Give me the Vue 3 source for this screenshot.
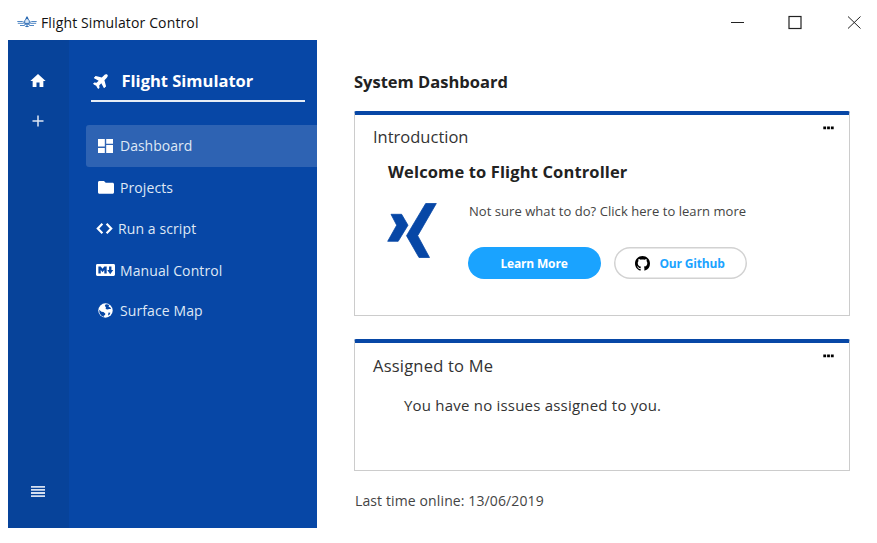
<script setup>
const menu = [
  { id: 'dashboard', label: 'Dashboard', active: true },
  { id: 'projects', label: 'Projects' },
  { id: 'script', label: 'Run a script' },
  { id: 'manual', label: 'Manual Control' },
  { id: 'map', label: 'Surface Map' },
]
</script>

<template>
  <div class="window">
    <header class="titlebar">
      <svg class="app-icon" viewBox="0 0 20 12">
        <g fill="none" stroke="#4f86c4" stroke-width="1">
          <path d="M.3 5.500h5.200l1.800 1M19.700 5.500h-5.200l-1.800 1M.8 7.300h5.700l1.200 1.100h4.600l1.200-1.100h5.700M3 9.500h4.500l1 1h3l1-1H17" />
          <path d="M10 1.800L7.700 4.800v2.600h4.600V4.800z" fill="#dbe8f6" stroke="#2f6db5" />
        </g>
        <path d="M10 0l1.700 2.800H8.300zM8.800 9.500h2.400L10 11.500z" fill="#2466b0" />
      </svg>
      <span class="app-title">Flight Simulator Control</span>
      <svg class="win-controls" viewBox="0 0 131 16" fill="none" stroke="#222" stroke-width="1">
        <path d="M0 7.500h13" />
        <rect x="58" y="1.500" width="12" height="12" stroke-width="1.200" />
        <path d="M117 1.500l12.500 12M129.500 1.500l-12.500 12" />
      </svg>
    </header>

    <div class="body">
      <nav class="rail">
        <svg class="home" viewBox="2 3 20 17" fill="#fff"><path d="M10 20v-6h4v6h5v-8h3L12 3 2 12h3v8z" /></svg>
        <svg class="plus" viewBox="0 0 12 12" fill="none" stroke="#dfe8f5" stroke-width="1.500"><path d="M6 .5v11M.5 6h11" /></svg>
        <svg class="lines" viewBox="0 0 14 11" fill="#d5e0f1"><path d="M0 0h14v1.800H0zM0 3.050h14v1.800H0zM0 6.100h14v1.800H0zM0 9.200h14V11H0z" /></svg>
      </nav>

      <aside class="side">
        <div class="brand">
          <svg class="plane" viewBox="0 0 576 512" fill="#fff">
            <path d="M480 192H365.710L260.610 8.060A16 16 0 0 0 246.710 0h-65.500c-10.630 0-18.300 10.170-15.380 20.390L214.860 192H112l-43.200-57.600c-3-4-7.800-6.400-12.800-6.400H16C5.600 128-2 137.800.5 147.900L32 256 .5 364.100C-2 374.200 5.600 384 16 384h40c5 0 9.800-2.400 12.800-6.400L112 320h102.860l-49 171.600c-2.900 10.200 4.700 20.400 15.400 20.400h65.500c5.700 0 11-3 13.900-8L365.710 320H480c35.300 0 96-28.700 96-64s-60.700-64-96-64z" />
          </svg>
          <span>Flight Simulator</span>
        </div>
        <ul class="menu">
          <li v-for="m in menu" :key="m.id" :class="[m.id, { active: m.active }]">
            <span class="mi">
              <svg v-if="m.id === 'dashboard'" width="15" height="14" viewBox="0 0 15 14" fill="#fff">
                <path d="M0 0h6.800v7.600H0zM0 8.900h6.800V14H0zM8.200 0H15v4.700H8.200zM8.200 6H15v8H8.200z" />
              </svg>
              <svg v-else-if="m.id === 'projects'" width="16" height="13" viewBox="0 0 16 13" fill="#fff">
                <path d="M1.500 0H6l1.700 1.700h6.800c.9 0 1.500.6 1.500 1.500v8c0 .9-.6 1.500-1.500 1.500h-13C.6 12.700 0 12.100 0 11.200V1.500C0 .6.600 0 1.500 0z" />
              </svg>
              <svg v-else-if="m.id === 'script'" width="17" height="11" viewBox="0 0 17 11" fill="none" stroke="#fff" stroke-width="2.200">
                <path d="M6.400.8L1.800 5.500l4.600 4.700M10.600.8l4.600 4.700-4.600 4.700" />
              </svg>
              <svg v-else-if="m.id === 'manual'" width="19" height="12" viewBox="0 3 16 10" fill="#fff">
                <path d="M14.850 3H1.150C.52 3 0 3.520 0 4.150v7.690C0 12.480.52 13 1.150 13h13.690c.64 0 1.150-.52 1.150-1.150v-7.700C16 3.520 15.480 3 14.850 3zM9 11H7V8L5.500 9.920 4 8v3H2V5h2l1.500 2L7 5h2v6zm2.990.5L9.500 8H11V5h2v3h1.500l-2.510 3.500z" />
              </svg>
              <svg v-else width="15" height="15" viewBox="0 0 15 15">
                <circle cx="7.500" cy="7.500" r="7.200" fill="#fff" />
                <path d="M7.800 1.200l2.400.3 1.100 1.200-.9 1.200 1.700.3 1 1.900-2-.2-1.600.7-1.800-.7.200-1.700-1.100-1.400zM1.200 6.800l2.300 1.900 2 .3 1.900 1.700-.4 1.300-1.300.7.2 1.200-2.700-1.400-1.700-2.600zM10.500 9.500l1.900.3-.9 1.900-1.500.9z" fill="#0747a6" />
              </svg>
            </span>
            <span class="label">{{ m.label }}</span>
          </li>
        </ul>
      </aside>

      <main class="main">
        <h1>System Dashboard</h1>

        <section class="card intro">
          <div class="card-head">
            <h2 class="t-intro">Introduction</h2>
            <svg class="dots" viewBox="0 0 11 4"><path d="M.3.500h2.800v2.800H.3zM4.100.500h2.800v2.800H4.100zM7.900.500h2.800v2.800H7.900z" /></svg>
          </div>
          <h3>Welcome to Flight Controller</h3>
          <div class="intro-row">
            <svg class="logo" viewBox="0 0 50 55" fill="#0747a6" stroke="#0747a6" stroke-width=".8" stroke-linejoin="round">
              <path d="M4 11.300h10.600L21 22.200 11.200 38.300H.7L9.700 22.200zM38.700.5h10.600L30.700 32.700 42.500 54.500H32L19.500 32.700z" />
            </svg>
            <div class="intro-text">
              <p>Not sure what to do? Click here to learn more</p>
              <div class="buttons">
                <button class="btn primary">Learn More</button>
                <button class="btn outline">
                  <svg viewBox="0 0 16 16"><path d="M8 0C3.580 0 0 3.580 0 8c0 3.540 2.290 6.530 5.470 7.590.4.070.55-.17.55-.38 0-.19-.01-.82-.01-1.490-2.010.37-2.530-.49-2.690-.94-.09-.23-.48-.94-.82-1.130-.28-.15-.68-.52-.01-.53.63-.01 1.080.58 1.230.82.72 1.210 1.870.87 2.330.66.070-.52.28-.87.51-1.070-1.780-.2-3.640-.89-3.640-3.950 0-.87.31-1.590.82-2.150-.08-.2-.36-1.020.08-2.120 0 0 .67-.21 2.200.82.64-.18 1.320-.27 2-.27s1.360.09 2 .27c1.530-1.040 2.200-.82 2.200-.82.44 1.100.16 1.920.08 2.120.51.56.82 1.270.82 2.150 0 3.070-1.870 3.750-3.650 3.950.29.25.54.73.54 1.480 0 1.070-.01 1.930-.01 2.200 0 .21.15.46.55.38A8.010 8.010 0 0 0 16 8c0-4.420-3.580-8-8-8z" /></svg>
                  <span>Our Github</span>
                </button>
              </div>
            </div>
          </div>
        </section>

        <section class="card assigned">
          <div class="card-head">
            <h2 class="t-assigned">Assigned to Me</h2>
            <svg class="dots" viewBox="0 0 11 4"><path d="M.3.500h2.800v2.800H.3zM4.100.500h2.800v2.800H4.100zM7.900.500h2.800v2.800H7.900z" /></svg>
          </div>
          <p class="empty">You have no issues assigned to you.</p>
        </section>

        <footer>Last time online: 13/06/2019</footer>
      </main>
    </div>
  </div>
</template>

<style>
body { background: #fff; }
</style>

<style scoped>
* { box-sizing: border-box; margin: 0; padding: 0; }
.window { width: 877px; height: 543px; background: #fff; font-family: "Open Sans", "Noto Sans", sans-serif; color: #222; white-space: nowrap; overflow: hidden; }
svg { display: block; flex: none; }
.titlebar { height: 40px; display: flex; align-items: center; padding: 6px 15px 0 17px; }
.app-icon { width: 20px; height: 12px; margin-top: -3px; }
.app-title { margin-left: 4px; font-size: 14px; line-height: 20px; letter-spacing: .13px; color: #111; flex: 1; }
.win-controls { width: 131px; height: 16px; }
.body { display: flex; height: 488px; padding-left: 7.500px; }
.rail { width: 61.500px; background: #07439a; display: flex; flex-direction: column; align-items: center; padding: 34px 1px 0 0; }
.home { width: 16px; height: 13px; }
.plus { width: 12px; height: 12px; margin-top: 28px; }
.lines { width: 14px; height: 11px; margin-top: auto; margin-bottom: 31px; }
.side { width: 247.500px; background: #0747a6; padding: 21px 0 0 17px; }
.brand { margin-left: 5px; width: 214px; height: 41px; display: flex; align-items: center; border-bottom: 2px solid #e6edf6; color: #fff; font-size: 16.500px; font-weight: 700; }
.plane { width: 17px; height: 15px; margin: 0 11.500px 0 2px; transform: rotate(-45deg); }
.menu { list-style: none; margin-top: 23px; }
.menu li { height: 41.500px; display: flex; align-items: center; padding-left: 10px; color: #dfe8f5; font-size: 14px; letter-spacing: .1px; }
.menu li.active { background: #2e63b3; border-radius: 3px 0 0 3px; letter-spacing: 0; }
.menu li.map { height: 39.500px; }
.mi { width: 19px; margin-right: 5px; display: flex; justify-content: center; }
.script .mi { width: 17px; }
.main { margin-left: 37.500px; width: 496px; }
h1 { font-size: 16.500px; line-height: 22px; margin-top: 31px; font-weight: 700; }
.card { border: 1px solid #ccc; border-top: 4px solid #0747a6; border-radius: 2px 2px 0 0; padding: 0 15px 0 18px; }
.intro { height: 205px; margin-top: 18px; }
.assigned { height: 132px; margin-top: 23px; }
.card-head { display: flex; justify-content: space-between; height: 44px; }
h2 { font-size: 16.500px; font-weight: 400; line-height: 22px; margin-top: 11px; color: #333; }
.t-assigned { letter-spacing: .21px; margin-top: 12px; }
.dots { width: 11px; height: 4px; margin-top: 11px; }
h3 { font-size: 16.500px; line-height: 24px; letter-spacing: .13px; margin: 1px 0 0 15px; font-weight: 700; }
.intro-row { display: flex; margin: 18px 0 0 14px; }
.logo { width: 50px; height: 55px; margin-top: 1px; }
.intro-text { margin-left: 31px; }
.intro-text p { font-size: 13px; line-height: 18px; letter-spacing: .05px; margin-left: 1px; color: #444; }
.buttons { display: flex; gap: 13px; margin-top: 27px; margin-left: -.5px; }
.btn { width: 133px; height: 32px; border-radius: 16px; border: 0; font: 700 12px "Open Sans", sans-serif; letter-spacing: -.17px; display: flex; align-items: center; justify-content: center; }
.primary { background: #1aa3ff; color: #fff; }
.outline { background: #fff; box-shadow: inset 0 0 0 1.500px #d2d2d2; color: #1aa3ff; }
.outline svg { width: 15px; height: 15px; margin: 1px 9px 0 0; }
.empty { margin: 7px 0 0 31px; font-size: 15px; line-height: 22px; letter-spacing: .21px; color: #333; }
footer { margin: 20px 0 0 1px; font-size: 14px; line-height: 20px; letter-spacing: .12px; color: #444; }
</style>
